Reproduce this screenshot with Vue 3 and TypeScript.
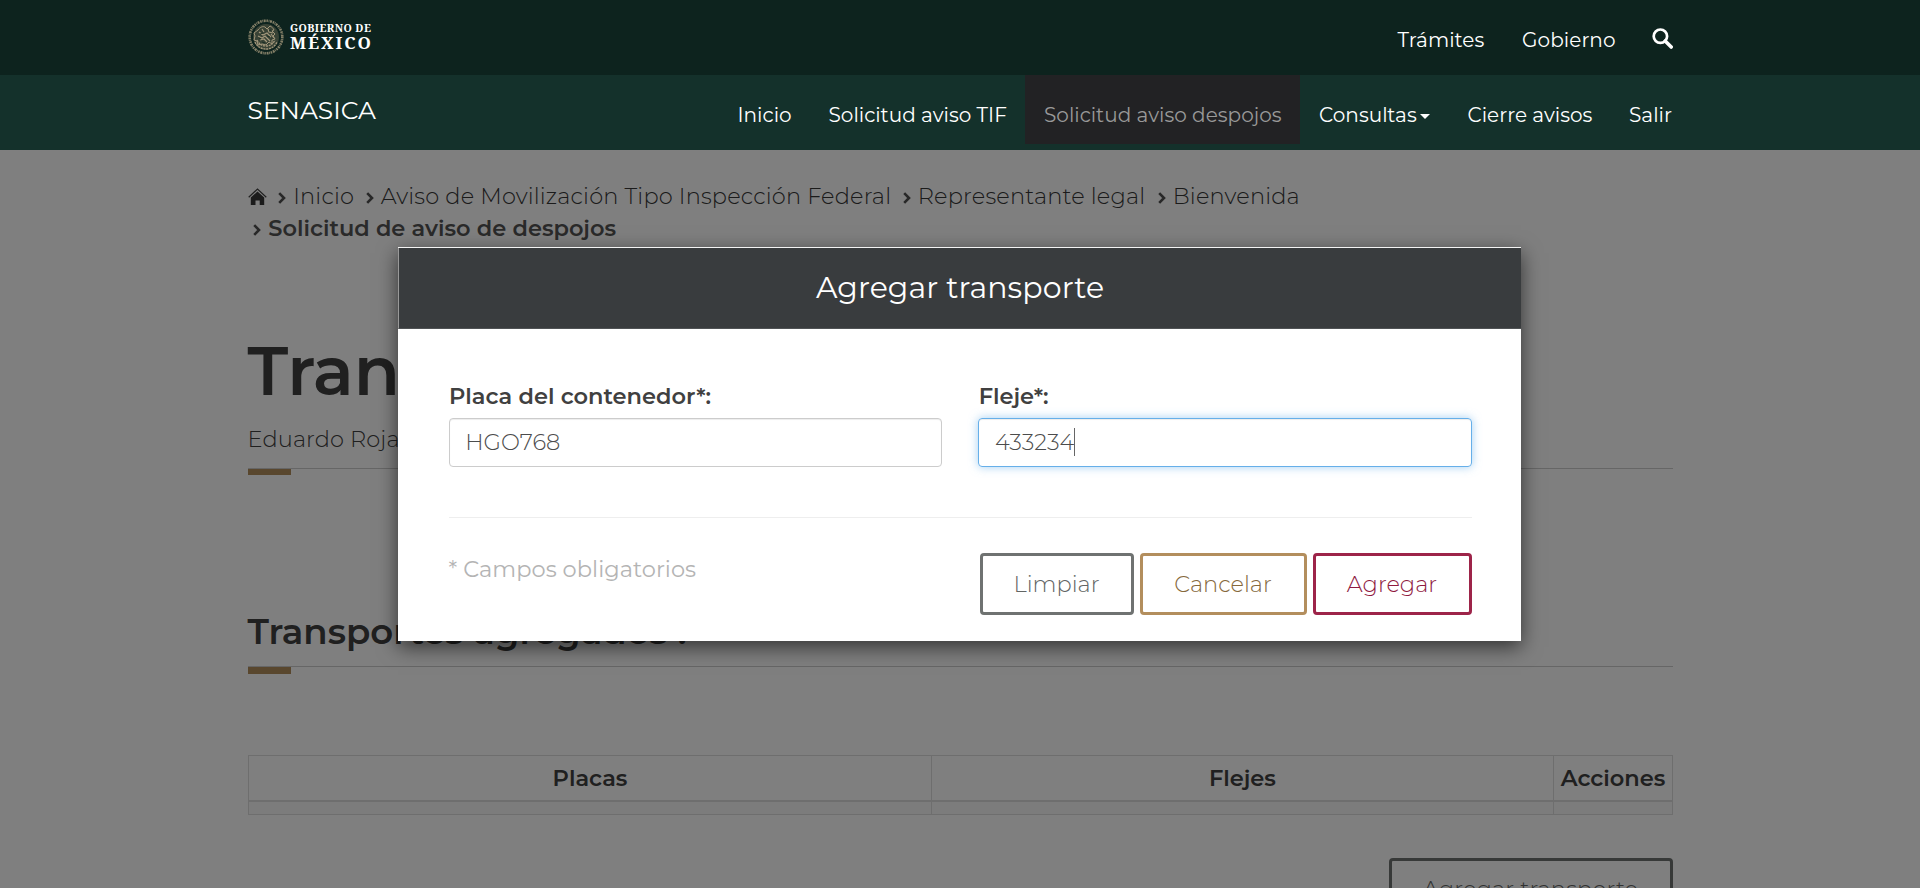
<script setup lang="ts">
interface NavItem {
  label: string
  width: number
  active?: boolean
  caret?: boolean
}
interface Crumb {
  label: string
  width: number
  current?: boolean
}

const topLinks: NavItem[] = [
  { label: 'Trámites', width: 124.5 },
  { label: 'Gobierno', width: 130 },
]

const navItems: NavItem[] = [
  { label: 'Inicio', width: 91 },
  { label: 'Solicitud aviso TIF', width: 215.5 },
  { label: 'Solicitud aviso despojos', width: 275, active: true },
  { label: 'Consultas', width: 148.5, caret: true },
  { label: 'Cierre avisos', width: 161.5 },
  { label: 'Salir', width: 82 },
]

const crumbRows: Crumb[][] = [
  [
    { label: 'Inicio', width: 87.5 },
    { label: 'Aviso de Movilización Tipo Inspección Federal', width: 537 },
    { label: 'Representante legal', width: 255 },
    { label: 'Bienvenida', width: 150 },
  ],
  [{ label: 'Solicitud de aviso de despojos', width: 380, current: true }],
]

const columns = ['Placas', 'Flejes', 'Acciones']

const px = (n: number) => `${n}px`
</script>

<template>
  <div class="page">
    <header class="topbar">
      <div class="container bar-row">
        <a class="brand">
          <svg class="seal" viewBox="0 0 36 36" width="36" height="36" fill="none" stroke="#a2977b">
            <circle cx="18" cy="18" r="16.3" stroke-width="2.6" stroke-dasharray="1.5 .7 .8 .6 2 .8" opacity=".8" />
            <circle cx="18" cy="18" r="13" fill="#6f6a55" fill-opacity=".45" stroke="none" />
            <path d="M10 11c2-3 5-4 7-3l2 2 3-3c2 1 3 2 4 4l-2 1 3 3-2 2 2 3-3 1v4l-3-2-3 3-4-1-4 1-1-4-3-1 1-4-1-3z" stroke-width="1" />
            <path d="M11 13l4 3 4-2 4 4M10 17l4 2 3-2 5 5M12 21l4-1 3 3M20 10l1 3 4 1M14 10l2 3M23 15l3 4" stroke-width="1.2" />
            <path d="M7 23c2 5 7 7 11 7s9-2 11-7M9 21c2 4 5 6 9 6s7-2 9-6" stroke-width="1.3" stroke-dasharray="2 .8" />
            <path d="M12 15l3-1m4 3 3 1m-8 5 3 1m4-12 2-1m-12 8 2 1" stroke="#1a2c24" stroke-width=".9" />
          </svg>
          <span class="brand-text">
            <span class="brand-small">GOBIERNO DE</span>
            <span class="brand-big">MÉXICO</span>
          </span>
        </a>
        <nav class="top-links">
          <a v-for="l in topLinks" :key="l.label" :style="{ width: px(l.width) }">{{ l.label }}</a>
          <svg class="search" viewBox="0 0 21 21" width="21" height="21" fill="none" stroke="#fff">
            <circle cx="8.4" cy="8.2" r="6.7" stroke-width="2.7" />
            <path d="M13.2 13l6 6" stroke-width="3.6" stroke-linecap="round" />
          </svg>
        </nav>
      </div>
    </header>

    <div class="subbar">
      <div class="container bar-row">
        <a class="site">SENASICA</a>
        <nav class="menu">
          <a
            v-for="n in navItems"
            :key="n.label"
            :class="{ active: n.active }"
            :style="{ width: px(n.width) }"
          >{{ n.label }}<i v-if="n.caret" class="caret"></i></a>
        </nav>
      </div>
    </div>

    <main class="container content">
      <div class="crumbs">
        <div v-for="(row, r) in crumbRows" :key="r" class="crumb-row" :class="{ second: r === 1 }">
          <svg v-if="r === 0" class="home" viewBox="0 0 19 17" width="19" height="17">
            <path d="M.7 9.3L9.5 1l8.8 8.3" fill="none" stroke="#404040" stroke-width="1.2" />
            <path d="M9.5 3.4l6.7 6.2V17h-4.5v-4.6H7.5V17H2.8V9.6z" fill="#363636" />
          </svg>
          <span v-for="c in row" :key="c.label" class="crumb" :class="{ current: c.current }" :style="{ width: px(c.width) }">
            <svg class="chev" viewBox="0 0 8 12" width="8" height="12" fill="none" stroke="#505050" stroke-width="2.6">
              <path d="M1.2 1.2L6 6l-4.8 4.8" />
            </svg>{{ c.label }}
          </span>
        </div>
      </div>

      <h1>Transporte</h1>
      <p class="user">Eduardo Rojas</p>
      <div class="rule"></div>

      <h3>Transportes agregados :</h3>
      <div class="rule tall"></div>

      <div class="table">
        <div v-for="c in columns" :key="c" class="th">{{ c }}</div>
        <div v-for="c in columns" :key="c + 'cell'" class="td"></div>
      </div>

      <div class="actions">
        <button class="btn add">Agregar transporte</button>
      </div>
    </main>

    <div class="backdrop"></div>

    <section class="modal">
      <div class="modal-head">Agregar transporte</div>
      <div class="modal-body">
        <div class="fields">
          <div class="field">
            <label>Placa del contenedor*:</label>
            <div class="input"><span>HGO768</span></div>
          </div>
          <div class="field">
            <label>Fleje*:</label>
            <div class="input focus"><span>433234</span><i class="cursor"></i></div>
          </div>
        </div>
        <div class="divider"></div>
        <div class="foot">
          <span class="note">* Campos obligatorios</span>
          <div class="buttons">
            <button class="btn clear">Limpiar</button>
            <button class="btn cancel">Cancelar</button>
            <button class="btn primary">Agregar</button>
          </div>
        </div>
      </div>
    </section>
  </div>
</template>

<style>
body {
  background: #fff;
  overflow: hidden;
}
</style>

<style scoped>
* {
  box-sizing: border-box;
}
.page {
  position: relative;
  height: 888px;
  overflow: hidden;
  background: #fff;
  font-family: Montserrat, Inter, 'Liberation Sans', sans-serif;
  font-size: 22.5px;
  font-weight: 300;
  color: #404040;
  white-space: nowrap;
}
.container {
  width: 1425px;
  margin: 0 auto 0 248px;
}
.topbar,
.subbar {
  position: relative;
  z-index: 2;
  height: 75px;
  color: #fff;
  font-size: 20px;
  font-weight: 400;
}
.topbar {
  background: #0d231e;
}
.subbar {
  background: #14312b;
}
.bar-row {
  display: flex;
  justify-content: space-between;
}
.brand {
  display: flex;
}
.seal {
  margin: 19px 6px 0 0;
}
.brand-text {
  display: flex;
  flex-direction: column;
  padding-top: 22px;
  font-family: 'Noto Serif', 'DejaVu Serif', serif;
  font-weight: 700;
}
.brand-small {
  font-size: 10.6px;
  line-height: 13px;
  letter-spacing: 0.4px;
}
.brand-big {
  margin-top: -1.5px;
  font-size: 17px;
  line-height: 17px;
  letter-spacing: 1.9px;
}
.top-links {
  display: flex;
  padding-top: 20px;
  line-height: 40px;
  letter-spacing: 0.08px;
}
.search {
  margin-top: 8px;
}
.site {
  margin-left: -0.5px;
  font-size: 25px;
  line-height: 70px;
}
.menu {
  display: flex;
  margin-right: -18.5px;
}
.menu a {
  height: 69px;
  padding: 11px 0 0 19.5px;
  line-height: 58px;
  letter-spacing: 0.03px;
}
.menu a.active {
  background: #222224;
  color: #999;
}
.caret {
  display: inline-block;
  margin-left: 3px;
  vertical-align: 3px;
  border: 5px solid transparent;
  border-top-color: #fff;
  border-bottom: 0;
}
.crumbs {
  padding-top: 30px;
}
.crumb-row {
  display: flex;
  height: 32px;
  line-height: 32px;
}
.crumb-row.second {
  padding-left: 5px;
}
.home {
  margin: 8px 11px 0 0;
}
.crumb {
  display: flex;
  letter-spacing: 0.17px;
  color: #363636;
}
.crumb.current {
  font-weight: 600;
  letter-spacing: 0;
  color: #545454;
}
.chev {
  flex: none;
  margin: 12px 7.25px 0 0;
}
h1 {
  margin: 91px 0 0 -0.5px;
  font-size: 67.5px;
  line-height: 72px;
  font-weight: 600;
}
.user {
  margin: 16px 0 0 -0.5px;
  line-height: 32px;
  letter-spacing: 0.1px;
}
.rule {
  margin-top: 13px;
  border-top: 1px solid #ccc;
}
.rule::after {
  content: '';
  display: block;
  width: 43px;
  height: 6px;
  background: #b38e5d;
}
.rule.tall {
  margin-top: 14px;
}
.rule.tall::after {
  height: 7px;
}
h3 {
  margin: 137px 0 0 -0.5px;
  font-size: 35.5px;
  line-height: 40px;
  font-weight: 600;
}
.table {
  display: grid;
  grid-template-columns: 683px 622px 119px;
  grid-template-rows: 46px 13px;
  width: 1425px;
  height: 60px;
  margin-top: 81px;
  border: solid #ddd;
  border-width: 1px 0 0 1px;
}
.th {
  border: solid #ddd;
  border-width: 0 1px 2px 0;
  text-align: center;
  font-weight: 600;
  line-height: 44px;
}
.td {
  border: solid #ddd;
  border-width: 0 1px 1px 0;
  background: #f9f9f9;
}
.actions {
  display: flex;
  justify-content: flex-end;
  margin-top: 43px;
}
.btn {
  height: 62px;
  padding: 0;
  border: 3px solid #6f7271;
  border-radius: 4px;
  background: transparent;
  font: inherit;
  line-height: 56px;
  color: #626564;
  text-align: center;
}
.add {
  width: 284px;
  padding-right: 1px;
  letter-spacing: 0.16px;
}
.backdrop {
  position: absolute;
  inset: 150px 0 0;
  z-index: 1;
  background: rgba(0, 0, 0, 0.5);
}
.modal {
  position: absolute;
  z-index: 3;
  left: 398px;
  top: 247px;
  width: 1123px;
  height: 394px;
  border-top: 1px solid #f4f4f4;
  background: #fff;
  box-shadow: 0 6px 19px rgba(0, 0, 0, 0.6);
}
.modal-head {
  height: 81px;
  border-left: 1px solid #999;
  border-bottom: 1px solid #505355;
  background: #393c3e;
  color: #fff;
  font-size: 30px;
  font-weight: 400;
  line-height: 79px;
  letter-spacing: 0.08px;
  text-align: center;
}
.modal-body {
  padding: 51px 49.5px 0 50.5px;
}
.fields {
  display: flex;
  gap: 36.5px;
}
.field {
  flex: 1;
}
label {
  display: block;
  padding-left: 0.5px;
  line-height: 32px;
  font-weight: 600;
}
.input {
  display: flex;
  height: 49px;
  margin-top: 6px;
  padding-left: 15.75px;
  border: 1px solid #ccc;
  border-radius: 4px;
  box-shadow: inset 0 1px 1px rgba(0, 0, 0, 0.075);
  line-height: 47px;
  color: #4c4c4c;
}
.focus {
  border-color: #66afe9;
  box-shadow: inset 0 1px 1px rgba(0, 0, 0, 0.075), 0 0 10px rgba(102, 175, 233, 0.6);
}
.cursor {
  width: 1px;
  height: 28px;
  margin-top: 9px;
  background: #666;
}
.divider {
  height: 1px;
  margin: 50px 0 35px;
  background: #eee;
}
.foot {
  display: flex;
  justify-content: space-between;
}
.note {
  line-height: 32px;
  font-weight: 400;
  letter-spacing: 0.04px;
  color: #b4b4b4;
}
.buttons {
  display: flex;
  gap: 6px;
}
.clear {
  width: 154px;
}
.cancel {
  width: 167px;
  border-color: #b38e5d;
  color: #86693c;
}
.primary {
  width: 159px;
  border-color: #9d2449;
  color: #8f1a3f;
}
</style>
